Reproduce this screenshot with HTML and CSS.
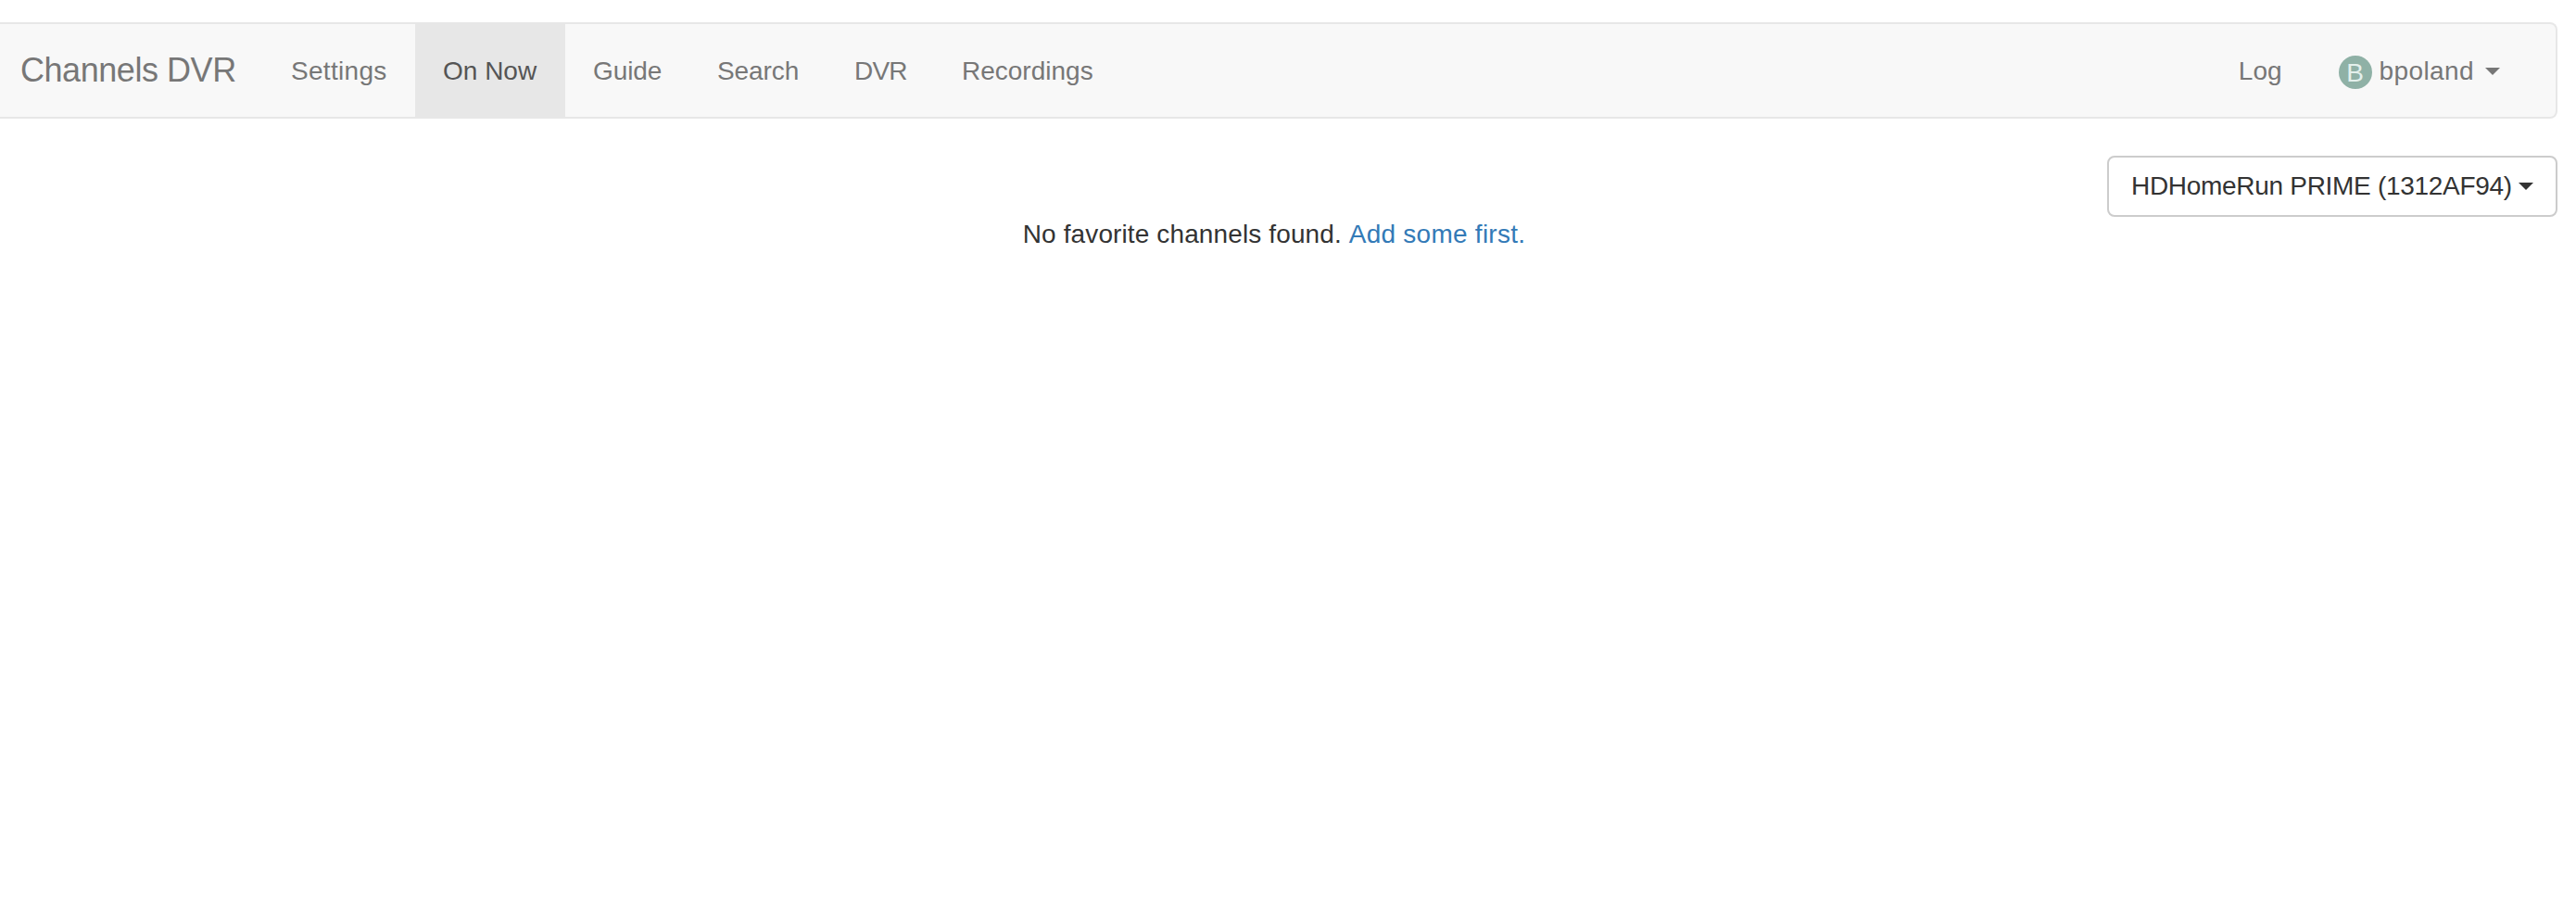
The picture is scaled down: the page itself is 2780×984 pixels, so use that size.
FILE: index.html
```html
<!DOCTYPE html>
<html lang="en">
<head>
    <meta charset="UTF-8">
    <meta name="viewport" content="width=device-width, initial-scale=1.0">
    <title>Channels DVR</title>
    <link rel="stylesheet" href="styles.css">
</head>
<body>
    <nav class="navbar">
        <a class="navbar-brand" href="#">Channels DVR</a>
        <ul class="nav">
            <li><a class="nav-settings" href="#">Settings</a></li>
            <li class="active"><a class="nav-now" href="#">On Now</a></li>
            <li><a class="nav-guide" href="#">Guide</a></li>
            <li><a class="nav-search" href="#">Search</a></li>
            <li><a class="nav-dvr" href="#">DVR</a></li>
            <li><a class="nav-recordings" href="#">Recordings</a></li>
        </ul>
        <ul class="nav navbar-right">
            <li><a class="nav-log" href="#">Log</a></li>
            <li>
                <a class="nav-user" href="#">
                    <span class="avatar">B</span>
                    <span class="username">bpoland</span>
                    <span class="caret"></span>
                </a>
            </li>
        </ul>
    </nav>

    <div class="content">
        <div class="toolbar">
            <button class="btn"><span class="btn-label">HDHomeRun PRIME (1312AF94)</span><span class="caret"></span></button>
        </div>
        <p class="message">No favorite channels found. <a href="#">Add some first.</a></p>
    </div>
</body>
</html>
```

FILE: styles.css
```css
* {
    box-sizing: border-box;
}
body {
    margin: 0;
    padding: 24px 20px 0 0;
    font-family: "Liberation Sans", Arial, sans-serif;
    font-size: 28px;
    line-height: 40px;
    color: #333;
    background-color: #fff;
}
a {
    color: #337ab7;
    text-decoration: none;
}
.navbar {
    display: flex;
    height: 104px;
    border: 2px solid #e7e7e7;
    border-left: 0;
    border-radius: 0 8px 8px 0;
    background-color: #f8f8f8;
}
.navbar a {
    display: block;
    height: 100px;
    padding: 31px 30px 29px;
    color: #777;
    white-space: nowrap;
}
.navbar .navbar-brand {
    width: 284px;
    padding: 30px 0 30px 22px;
    font-size: 36px;
    letter-spacing: -0.45px;
}
.nav {
    display: flex;
    margin: 0;
    padding: 0;
    list-style: none;
}
.nav .nav-settings {
    width: 164px;
    letter-spacing: 0.3px;
}
.nav .nav-now {
    width: 162px;
}
.nav .nav-guide {
    width: 134px;
    letter-spacing: -0.1px;
}
.nav .nav-search {
    width: 148px;
    letter-spacing: -0.1px;
}
.nav .nav-dvr {
    width: 116px;
    letter-spacing: -0.8px;
}
.navbar .active a {
    color: #555;
    background-color: #e7e7e7;
}
.navbar-right {
    margin-left: auto;
    padding-right: 30px;
}
.navbar .nav-log {
    padding-right: 31px;
}
.navbar .nav-user {
    display: flex;
    align-items: center;
}
.avatar {
    width: 36px;
    height: 36px;
    margin-right: 8px;
    margin-top: 2px;
    border-radius: 50%;
    font-size: 28px;
    line-height: 37px;
    text-align: center;
    color: #e4f0ec;
    background-color: #8fb1a6;
}
.username {
    letter-spacing: 0.4px;
}
.caret {
    display: inline-block;
    border-top: 8px solid;
    border-left: 8px solid transparent;
    border-right: 8px solid transparent;
}
.nav-user .caret {
    margin-left: 12px;
}
.toolbar {
    display: flex;
    justify-content: flex-end;
    padding-top: 40px;
}
.btn {
    display: flex;
    align-items: center;
    justify-content: space-between;
    width: 486px;
    height: 66px;
    padding: 0 24px;
    border: 2px solid #ccc;
    border-radius: 8px;
    font-family: inherit;
    font-size: 28px;
    color: #333;
    background-color: #fff;
}
.btn-label {
    letter-spacing: -0.3px;
    white-space: nowrap;
}
.message {
    margin: -1px 0 0;
    padding-right: 10px;
    text-align: center;
    letter-spacing: 0.12px;
}
.message a {
    letter-spacing: 0.25px;
}
```
